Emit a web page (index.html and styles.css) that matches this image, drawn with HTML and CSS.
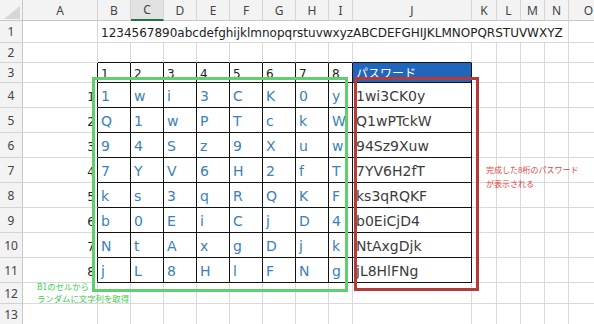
FILE: index.html
```html
<!DOCTYPE html>
<html lang="ja">
<head>
<meta charset="utf-8">
<title>パスワード生成</title>
<link rel="stylesheet" href="styles.css">
</head>
<body>
<div class="sheet">
  <!-- header row -->
  <div class="corner"></div>
  <div class="ch">A</div><div class="ch">B</div><div class="ch sel">C</div><div class="ch">D</div><div class="ch">E</div><div class="ch">F</div><div class="ch">G</div><div class="ch">H</div><div class="ch">I</div><div class="ch">J</div><div class="ch">K</div><div class="ch">L</div><div class="ch">M</div><div class="ch">N</div><div class="ch">O</div>

  <!-- row 1 -->
  <div class="rh">1</div><div class="c"></div>
  <div class="c src">1234567890abcdefghijklmnopqrstuvwxyzABCDEFGHIJKLMNOPQRSTUVWXYZ</div>
  <div class="c"></div>

  <!-- row 2 -->
  <div class="rh">2</div><div class="c"></div>
  <div class="c ab"></div><div class="c ab"></div><div class="c ab"></div><div class="c ab"></div><div class="c ab"></div><div class="c ab"></div><div class="c ab"></div><div class="c ab"></div><div class="c ab"></div>
  <div class="c"></div><div class="c"></div><div class="c"></div><div class="c"></div><div class="c"></div>

  <!-- row 3 -->
  <div class="rh">3</div><div class="c lf"></div>
  <div class="c t">1</div><div class="c t">2</div><div class="c t">3</div><div class="c t">4</div><div class="c t">5</div><div class="c t">6</div><div class="c t">7</div><div class="c t">8</div>
  <div class="c t hd">パスワード</div>
  <div class="c"></div><div class="c"></div><div class="c"></div><div class="c"></div><div class="c"></div>

  <!-- row 4 -->
  <div class="rh">4</div><div class="c lf num">1</div>
  <div class="c t ch1">1</div><div class="c t ch1">w</div><div class="c t ch1">i</div><div class="c t ch1">3</div><div class="c t ch1">C</div><div class="c t ch1">K</div><div class="c t ch1">0</div><div class="c t ch1">y</div>
  <div class="c t pw">1wi3CK0y</div>
  <div class="c"></div><div class="c"></div><div class="c"></div><div class="c"></div><div class="c"></div>

  <!-- row 5 -->
  <div class="rh">5</div><div class="c lf num">2</div>
  <div class="c t ch1">Q</div><div class="c t ch1">1</div><div class="c t ch1">w</div><div class="c t ch1">P</div><div class="c t ch1">T</div><div class="c t ch1">c</div><div class="c t ch1">k</div><div class="c t ch1">W</div>
  <div class="c t pw">Q1wPTckW</div>
  <div class="c"></div><div class="c"></div><div class="c"></div><div class="c"></div><div class="c"></div>

  <!-- row 6 -->
  <div class="rh">6</div><div class="c lf num">3</div>
  <div class="c t ch1">9</div><div class="c t ch1">4</div><div class="c t ch1">S</div><div class="c t ch1">z</div><div class="c t ch1">9</div><div class="c t ch1">X</div><div class="c t ch1">u</div><div class="c t ch1">w</div>
  <div class="c t pw">94Sz9Xuw</div>
  <div class="c"></div><div class="c"></div><div class="c"></div><div class="c"></div><div class="c"></div>

  <!-- row 7 -->
  <div class="rh">7</div><div class="c lf num">4</div>
  <div class="c t ch1">7</div><div class="c t ch1">Y</div><div class="c t ch1">V</div><div class="c t ch1">6</div><div class="c t ch1">H</div><div class="c t ch1">2</div><div class="c t ch1">f</div><div class="c t ch1">T</div>
  <div class="c t pw">7YV6H2fT</div>
  <div class="c"></div><div class="c"></div><div class="c"></div><div class="c"></div><div class="c"></div>

  <!-- row 8 -->
  <div class="rh">8</div><div class="c lf num">5</div>
  <div class="c t ch1">k</div><div class="c t ch1">s</div><div class="c t ch1">3</div><div class="c t ch1">q</div><div class="c t ch1">R</div><div class="c t ch1">Q</div><div class="c t ch1">K</div><div class="c t ch1">F</div>
  <div class="c t pw">ks3qRQKF</div>
  <div class="c"></div><div class="c"></div><div class="c"></div><div class="c"></div><div class="c"></div>

  <!-- row 9 -->
  <div class="rh">9</div><div class="c lf num">6</div>
  <div class="c t ch1">b</div><div class="c t ch1">0</div><div class="c t ch1">E</div><div class="c t ch1">i</div><div class="c t ch1">C</div><div class="c t ch1">j</div><div class="c t ch1">D</div><div class="c t ch1">4</div>
  <div class="c t pw">b0EiCjD4</div>
  <div class="c"></div><div class="c"></div><div class="c"></div><div class="c"></div><div class="c"></div>

  <!-- row 10 -->
  <div class="rh">10</div><div class="c lf num">7</div>
  <div class="c t ch1">N</div><div class="c t ch1">t</div><div class="c t ch1">A</div><div class="c t ch1">x</div><div class="c t ch1">g</div><div class="c t ch1">D</div><div class="c t ch1">j</div><div class="c t ch1">k</div>
  <div class="c t pw">NtAxgDjk</div>
  <div class="c"></div><div class="c"></div><div class="c"></div><div class="c"></div><div class="c"></div>

  <!-- row 11 -->
  <div class="rh">11</div><div class="c lf num">8</div>
  <div class="c t ch1">j</div><div class="c t ch1">L</div><div class="c t ch1">8</div><div class="c t ch1">H</div><div class="c t ch1">l</div><div class="c t ch1">F</div><div class="c t ch1">N</div><div class="c t ch1">g</div>
  <div class="c t pw">jL8HlFNg</div>
  <div class="c"></div><div class="c"></div><div class="c"></div><div class="c"></div><div class="c"></div>

  <!-- row 12 -->
  <div class="rh">12</div><div class="c"></div>
  <div class="c"></div><div class="c"></div><div class="c"></div><div class="c"></div><div class="c"></div><div class="c"></div><div class="c"></div><div class="c"></div><div class="c"></div>
  <div class="c"></div><div class="c"></div><div class="c"></div><div class="c"></div><div class="c"></div>

  <!-- row 13 -->
  <div class="rh">13</div><div class="c"></div>
  <div class="c"></div><div class="c"></div><div class="c"></div><div class="c"></div><div class="c"></div><div class="c"></div><div class="c"></div><div class="c"></div><div class="c"></div>
  <div class="c"></div><div class="c"></div><div class="c"></div><div class="c"></div><div class="c"></div>

  <!-- overlays -->
  <div class="box green"></div>
  <div class="box red"></div>
  <div class="note note-red">完成した8桁のパスワード<br>が表示される</div>
  <div class="note note-green">B1のセルから<br>ランダムに文字列を取得</div>
</div>
</body>
</html>
```

FILE: styles.css
```css
* { box-sizing: border-box; }

html, body {
  margin: 0;
  padding: 0;
  background: #ffffff;
  overflow: hidden;
}

.sheet {
  position: relative;
  display: grid;
  grid-template-columns: 23px 75px repeat(7, 33px) 24px 119px 25px 24px 24px 24px 40px;
  grid-template-rows: 21px 22px 20px 20px repeat(8, 25px) 21px 21px;
  width: 609px;
  font-family: "DejaVu Sans", "Noto Sans CJK JP", sans-serif;
  color: #222;
}

.corner {
  position: relative;
  background: #f3f3f3;
  border-right: 1px solid #c9c9c9;
  border-bottom: 1px solid #c9c9c9;
}
.corner::after {
  content: "";
  position: absolute;
  left: 4px;
  top: 6px;
  width: 16px;
  height: 13px;
  background: #d6d6d6;
  clip-path: polygon(100% 0, 100% 100%, 0 100%);
}

.ch {
  display: flex;
  align-items: center;
  justify-content: center;
  background: #f3f3f3;
  border-right: 1px solid #d4d4d4;
  border-bottom: 1px solid #c9c9c9;
  font-family: "Noto Sans", "DejaVu Sans", sans-serif;
  font-size: 12px;
  color: #444;
}
.ch.sel {
  background: #e2e2e2;
  border-bottom: 2px solid #217346;
}

.rh {
  display: flex;
  align-items: center;
  justify-content: center;
  background: #f3f3f3;
  border-right: 1px solid #c9c9c9;
  border-bottom: 1px solid #d4d4d4;
  font-family: "Noto Sans", "DejaVu Sans", sans-serif;
  font-size: 12px;
  color: #444;
}

.c {
  display: flex;
  align-items: flex-end;
  padding: 0 2px 1px 3px;
  border-right: 1px solid #d9d9d9;
  border-bottom: 1px solid #d9d9d9;
  white-space: nowrap;
  font-size: 12px;
  color: #222;
  min-width: 0;
}

.src {
  grid-column: span 13;
  padding-bottom: 2px;
}

.ab { border-bottom-color: #111; }
.lf { border-right-color: #111; }
.t {
  border-right-color: #111;
  border-bottom-color: #111;
  overflow: hidden;
}

.num {
  justify-content: flex-end;
  padding-right: 2px;
  padding-bottom: 3px;
}

.hd {
  background: #2166bd;
  color: #ffffff;
  font-family: "Noto Sans CJK JP", sans-serif;
  font-size: 12px;
  padding-bottom: 1px;
  align-items: center;
}

.ch1 {
  font-size: 14px;
  color: #3a82b8;
  padding-bottom: 3px;
}

.pw {
  font-size: 14px;
  color: #3c3c3c;
  padding-bottom: 3px;
}

.box {
  position: absolute;
  pointer-events: none;
}
.green {
  left: 92px;
  top: 77px;
  width: 256px;
  height: 215px;
  border: 3px solid #5fd16c;
}
.red {
  left: 354px;
  top: 77px;
  width: 125px;
  height: 214px;
  border: 3px solid #b53b3b;
}

.note {
  position: absolute;
  font-family: "Noto Sans CJK JP", sans-serif;
  white-space: nowrap;
}
.note-red {
  left: 486px;
  top: 163px;
  font-size: 8px;
  line-height: 14px;
  color: #e2453f;
}
.note-green {
  left: 37px;
  top: 280px;
  font-size: 8.4px;
  line-height: 12px;
  color: #3ccc50;
}
```
